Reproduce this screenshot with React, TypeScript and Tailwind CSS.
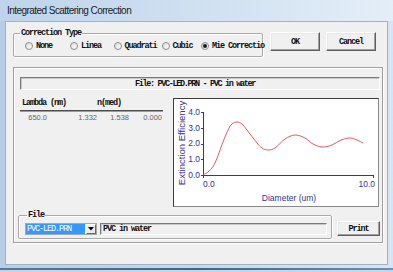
import React from "react";

const mono = "font-['Liberation_Mono',monospace] text-[8.5px] tracking-[-1.1px] text-[#111111] font-bold";

function Radio({ label, checked, cls }: { label: string; checked?: boolean; cls: string }) {
  return (
    <div className={"flex items-center " + cls}>
      <div className="w-[8px] h-[8px] rounded-full border border-[#8b8b8b] bg-gradient-to-br from-[#dcdcdc] to-[#ffffff] flex items-center justify-center shrink-0">
        {checked && <div className="w-[4px] h-[4px] rounded-full bg-[#1a1a1a]" />}
      </div>
      <span className={mono + " ml-[3px] leading-[10px] whitespace-nowrap"}>{label}</span>
    </div>
  );
}

function Btn({ label, cls }: { label: string; cls: string }) {
  return (
    <div
      className={
        "flex items-center justify-center bg-[#f0f0f0] border-t border-l border-t-[#ffffff] border-l-[#ffffff] border-r border-b border-r-[#5f5f5f] border-b-[#5f5f5f] shadow-[inset_-1px_-1px_0_#a0a0a0,inset_1px_1px_0_#e8e8e8] " +
        cls
      }
    >
      <span className={mono + " leading-[10px]"}>{label}</span>
    </div>
  );
}

const pts: [number, number][] = [
  [203, 175],
  [209, 171],
  [215, 163],
  [223, 142],
  [228, 130],
  [232, 124],
  [237, 122],
  [242, 124],
  [247, 130],
  [257, 143],
  [262, 148],
  [268, 150],
  [275, 148],
  [285, 139],
  [295, 135],
  [305, 138],
  [313, 144],
  [322, 147],
  [332, 145],
  [341, 140],
  [350, 138],
  [357, 140],
  [363, 143],
];

function curvePath(): string {
  const p = pts.map(([x, y]) => [x - 174, y - 99] as [number, number]);
  let d = `M${p[0][0]},${p[0][1]}`;
  for (let i = 0; i < p.length - 1; i++) {
    const p0 = p[i - 1] || p[i];
    const p1 = p[i];
    const p2 = p[i + 1];
    const p3 = p[i + 2] || p2;
    const c1x = p1[0] + (p2[0] - p0[0]) / 6;
    const c1y = p1[1] + (p2[1] - p0[1]) / 6;
    const c2x = p2[0] - (p3[0] - p1[0]) / 6;
    const c2y = p2[1] - (p3[1] - p1[1]) / 6;
    d += ` C${c1x.toFixed(2)},${c1y.toFixed(2)} ${c2x.toFixed(2)},${c2y.toFixed(2)} ${p2[0]},${p2[1]}`;
  }
  return d;
}

function Chart() {
  const ax = "#34348e";
  const yv = [0, 1, 2, 3, 4];
  return (
    <div className="w-[206px] h-[109px] bg-white border-t border-l border-t-[#3c3c3c] border-l-[#3c3c3c] border-r border-b border-r-[#8a8a8a] border-b-[#8a8a8a]">
      <svg width="204" height="107" viewBox="0 0 204 107" className="block">
        <g fontFamily="'Liberation Sans', Arial, sans-serif" fill={ax}>
          <text
            x={8}
            y={44}
            fontSize="9.5"
            textAnchor="middle"
            dominantBaseline="middle"
            transform="rotate(-90 8 44)"
          >
            Extinction Efficiency
          </text>
          {yv.map((v) => (
            <text key={v} x={26} y={76 - 15.75 * v + 0.5} fontSize="8.5" textAnchor="end" dominantBaseline="middle">
              {v.toFixed(1)}
            </text>
          ))}
          <text x={29} y={86} fontSize="8.5" dominantBaseline="middle">
            0.0
          </text>
          <text x={201} y={86} fontSize="8.5" textAnchor="end" dominantBaseline="middle">
            10.0
          </text>
          <text x={115} y={100} fontSize="8.5" textAnchor="middle" dominantBaseline="middle">
            Diameter (um)
          </text>
        </g>
        <g stroke={ax} strokeWidth="1" fill="none" shapeRendering="crispEdges">
          <line x1={29.5} y1={13} x2={29.5} y2={76.5} />
          <line x1={29} y1={76.5} x2={200} y2={76.5} />
          {yv.map((v) => (
            <line key={v} x1={27} y1={Math.round(76 - 15.75 * v) + 0.5} x2={29.5} y2={Math.round(76 - 15.75 * v) + 0.5} />
          ))}
          <line x1={29.5} y1={76} x2={29.5} y2={79} />
          <line x1={199.5} y1={76} x2={199.5} y2={79} />
        </g>
        <path d={curvePath()} stroke="#e05a5a" strokeWidth="1" fill="none" />
      </svg>
    </div>
  );
}

export default function App() {
  return (
    <div className="w-[393px] h-[272px] overflow-hidden flex flex-col bg-gradient-to-r from-[#b7cee6] via-[#c6d9ec] to-[#d6e5f3]">
      {/* title bar */}
      <div className="h-[21px] shrink-0 flex items-center pl-[7px] bg-gradient-to-r from-[#bfd4ea] via-[#cfe0f1] to-[#e4eef8]">
        <span className="font-['Liberation_Sans',Arial,sans-serif] text-[10px] tracking-[-0.55px] text-[#1b1b1b] leading-[12px]">
          Integrated Scattering Correction
        </span>
      </div>

      {/* client */}
      <div className="ml-[5px] w-[383px] h-[244px] shrink-0 bg-[#f0f0f0] border border-[#9fb3c8] flex flex-col">
        {/* top row */}
        <div className="flex items-start mt-[6px]">
          <fieldset className="ml-[7px] w-[250px] h-[29px] border border-[#a9a9a9] rounded-[2px] shadow-[inset_1px_1px_0_#ffffff,1px_1px_0_#ffffff]">
            <legend className={mono + " ml-[6px] px-[1px] leading-[10px]"}>Correction Type</legend>
            <div className="flex items-center h-[10px] mt-[3px] pl-[11px]">
              <Radio label="None" cls="w-[45px]" />
              <Radio label="Linea" cls="w-[43.5px]" />
              <Radio label="Quadrati" cls="w-[48px]" />
              <Radio label="Cubic" cls="w-[39.5px]" />
              <Radio label="Mie Correctio" checked cls="w-[60px]" />
            </div>
          </fieldset>
          <Btn label="OK" cls="ml-[7px] mt-[4px] w-[50px] h-[19px]" />
          <Btn label="Cancel" cls="ml-[6px] mt-[4px] w-[50px] h-[19px]" />
        </div>

        {/* main panel */}
        <div className="mt-[10px] ml-[7px] w-[370px] h-[176px] border border-[#a0a0a0] shadow-[inset_1px_1px_0_#ffffff,1px_1px_0_#ffffff] flex flex-col">
          {/* header */}
          <div className="mt-[9px] ml-[6px] w-[360px] h-[13px] border-t border-l border-t-[#7a7a7a] border-l-[#7a7a7a] border-b border-r border-b-[#ffffff] border-r-[#ffffff] shadow-[inset_1px_1px_0_#c8c8c8] flex items-center pl-[114px]">
            <span className={mono + " tracking-[-1.35px] leading-[10px] whitespace-nowrap"}>
              File: PVC-LED.PRN - PVC in water
            </span>
          </div>

          {/* middle */}
          <div className="mt-[8px] flex h-[109px]">
            <div className="ml-[6px] w-[153px] flex flex-col">
              <div className="flex h-[10px] items-center">
                <span className={mono + " pl-[2px] w-[77px] leading-[10px] whitespace-nowrap"}>Lambda (nm)</span>
                <span className={mono + " leading-[10px]"}>n(med)</span>
              </div>
              <div className="mt-[2px] w-[143px] h-[1px] bg-[#4e4e4e]" />
              <div className="w-[143px] h-[1px] bg-[#9a9a9a]" />
              <div className="mt-[1px] grid grid-cols-[27px_50px_32px_33px] h-[10px] items-center font-['Liberation_Sans',Arial,sans-serif] text-[7.5px] text-[#686868] text-right leading-[10px]">
                <span>650.0</span>
                <span>1.332</span>
                <span>1.538</span>
                <span>0.000</span>
              </div>
            </div>
            <Chart />
          </div>

          {/* file row */}
          <div className="mt-[3px] flex items-start">
            <fieldset className="ml-[4px] w-[314px] h-[29px] border border-[#a9a9a9] rounded-[2px] shadow-[inset_1px_1px_0_#ffffff,1px_1px_0_#ffffff]">
              <legend className={mono + " ml-[8px] px-[1px] leading-[10px]"}>File</legend>
              <div className="flex mt-[3px] ml-[6px]">
                <div className="w-[72px] h-[12px] border border-[#a8a8a8] bg-white flex">
                  <div className="w-[59px] h-[10px] bg-[#3399ff] flex items-center pl-[1px]">
                    <span className={mono + " !text-white !font-normal leading-[10px] whitespace-nowrap"}>PVC-LED.PRN</span>
                  </div>
                  <div className="ml-[1px] w-[10px] h-[10px] bg-[#ececec] border-t border-l border-t-[#ffffff] border-l-[#ffffff] border-r border-b border-r-[#6a6a6a] border-b-[#6a6a6a] flex items-center justify-center">
                    <svg width="6" height="4" viewBox="0 0 6 4" className="block">
                      <path d="M0 0 H6 L3 3.5 Z" fill="#000" />
                    </svg>
                  </div>
                </div>
                <div className="ml-[3px] w-[227px] h-[12px] border-t border-l border-t-[#7a7a7a] border-l-[#7a7a7a] border-b border-r border-b-[#ffffff] border-r-[#ffffff] shadow-[inset_1px_1px_0_#c8c8c8] flex items-center pl-[2px]">
                  <span className={mono + " leading-[10px] whitespace-nowrap"}>PVC in water</span>
                </div>
              </div>
            </fieldset>
            <Btn label="Print" cls="ml-[5px] mt-[11px] w-[43px] h-[15px]" />
          </div>
        </div>
      </div>

      {/* bottom frame */}
      <div className="flex-1 flex flex-col">
        <div className="h-[3px]" />
        <div className="h-[2px] bg-gradient-to-r from-[#5a7894] via-[#3e6684] to-[#6f8fac]" />
        <div className="flex-1 bg-[#c2d6ea]" />
      </div>
    </div>
  );
}
